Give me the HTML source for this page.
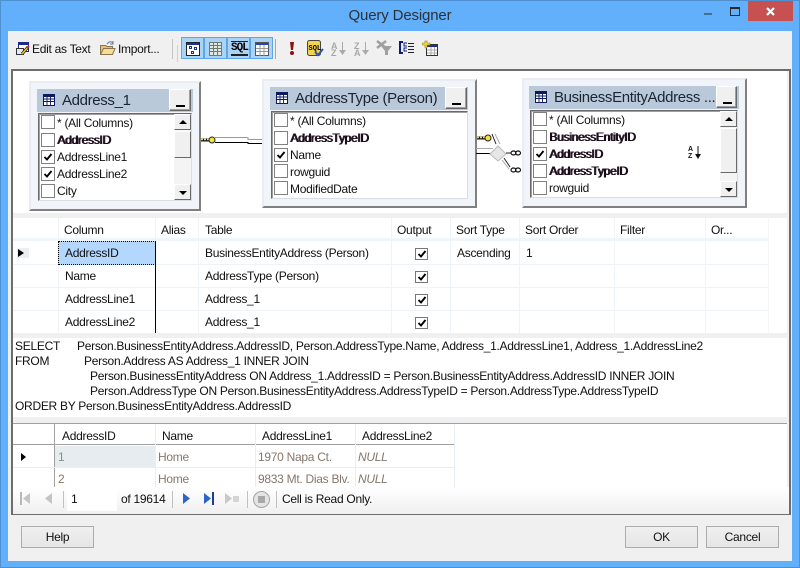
<!DOCTYPE html>
<html><head><meta charset="utf-8"><title>Query Designer</title>
<style>
html,body{margin:0;padding:0;width:800px;height:568px;overflow:hidden;background:#62b0fb}
*{box-sizing:border-box}
body{position:relative;font:12px "Liberation Sans",sans-serif;color:#101010;letter-spacing:-.28px}
div,span,svg{position:absolute}
.t{white-space:nowrap;line-height:14px;height:14px}
.b{color:#1a0a18;text-shadow:1px 0 0 #1a0a18}
.c{width:14px;height:14px;border:1px solid #808080;background:#fff}
.c svg{left:0;top:0}
.o{width:13px;height:12px;left:415px;border:1px solid #777;background:#fff}
.o svg{left:0;top:-1px}
.box{background:#f1f5fa;border:2px solid;border-color:#e9edf2 #808080 #808080 #e9edf2}
.ttl{background:#b9c9da}
.ttx{font-size:15px;line-height:18px;white-space:nowrap;color:#1a2433;letter-spacing:-.35px}
.min{background:#f0f0f0;border:1px solid;border-color:#fff #696969 #696969 #fff;box-shadow:inset -1px -1px 0 #a0a0a0}
.min i{position:absolute;left:6px;bottom:3px;width:9px;height:2px;background:#000}
.list{background:#fff;border:1px solid;border-color:#696969 #d8dde3 #d8dde3 #696969;box-shadow:inset 1px 1px 0 #a0a0a0;overflow:hidden}
.sb{background:#f4f4f4;width:17px}
.sbb{left:0;width:17px;background:#f0f0f0;border:1px solid;border-color:#fff #696969 #696969 #fff}
.up,.dn{width:0;height:0;left:4px;border-left:4px solid transparent;border-right:4px solid transparent}
.up{border-bottom:4px solid #000;top:5px}.dn{border-top:4px solid #000;top:6px}
.hl{background:#eef3f8}
.btn{background:linear-gradient(#f0f0f0,#e5e5e5);border:1px solid #acacac;text-align:center;line-height:20px;height:22px;color:#101010}
.tb{background:#abd3f6;border:1px solid #5ca6ea;height:22px;top:37px;width:23px}
.az{font-size:9px;font-weight:bold;color:#a8a8a8;line-height:8px;height:8px;letter-spacing:0}
</style></head><body>
<svg width="0" height="0" style="left:0;top:0"><defs><symbol id="k" viewBox="0 0 12 12"><path d="M2.500 6 L5 8.500 L9.500 3" fill="none" stroke="#000" stroke-width="1.900"/></symbol></defs></svg>

<!-- window frame -->
<div style="left:0;top:0;width:800px;height:568px;border:1px solid #4e8fd0"></div>
<div class="t" style="left:300px;top:7px;width:200px;text-align:center;font-size:15px;line-height:18px;height:18px;color:#2c3138;letter-spacing:-.15px">Query Designer</div>
<div style="left:748px;top:1px;width:45px;height:20px;background:#c75050"></div>
<svg style="left:765px;top:7px" width="11" height="9"><path d="M2 1L9 8M9 1L2 8" stroke="#fff" stroke-width="2.200" fill="none"/></svg>
<div style="left:704px;top:13px;width:8px;height:2px;background:#44708f"></div>
<div style="left:730px;top:7px;width:10px;height:9px;border:1px solid #2a2a2a;border-top-width:2px"></div>

<!-- client -->
<div style="left:8px;top:31px;width:784px;height:530px;background:#f0f0f0"></div>

<!-- toolbar -->
<svg style="left:15px;top:41px" width="16" height="16"><rect x="3.500" y="1.500" width="10" height="9" fill="#fff" stroke="#1d2a7a"/><rect x="3" y="1" width="11" height="3" fill="#1d2a8a"/><rect x="1.500" y="7.500" width="7" height="6" fill="#e8e8f4" stroke="#333"/><path d="M7 13L13 6" stroke="#222" stroke-width="3"/><path d="M7 13L13 6" stroke="#f2c62e" stroke-width="1.500"/><path d="M12 7L14 5" stroke="#d02828" stroke-width="2"/></svg>
<div class="t" style="left:32px;top:42px">Edit as Text</div>
<svg style="left:99px;top:40px" width="17" height="16"><path d="M1.500 14.500V5.500H7L8 6.500H13.500V14.500Z" fill="#e8c070" stroke="#8a7650"/><path d="M1.500 14.500L4.500 8.500H16L13.500 14.500Z" fill="#f7dc95" stroke="#8a7650"/><path d="M8 4Q11 0 14 3M14 1V4H11" fill="none" stroke="#5a7d98"/></svg>
<div class="t" style="left:118px;top:42px">Import...</div>
<div style="left:172px;top:39px;width:1px;height:20px;background:#c4c4c4"></div>
<div style="left:177px;top:45px;width:1px;height:17px;background:#d0d0d0"></div>
<div style="left:181px;top:37px;width:92px;height:22px;background:#5ca6ea"></div>
<div class="tb" style="left:181px"></div>
<div class="tb" style="left:204px"></div>
<div class="tb" style="left:227px"></div>
<div class="tb" style="left:250px"></div>
<svg style="left:186px;top:42px" width="14" height="14"><rect x=".5" y=".5" width="13" height="13" fill="#fff" stroke="#222"/><rect x="1" y="1" width="12" height="2" fill="#1c2f9e"/><rect x="3.500" y="4.500" width="2" height="2" fill="#fff" stroke="#1c2f9e"/><rect x="8.500" y="5.500" width="2" height="2" fill="#fff" stroke="#1c2f9e"/><rect x="5.500" y="9.500" width="2" height="2" fill="#fff" stroke="#1c2f9e"/></svg>
<svg style="left:209px;top:42px" width="14" height="14"><rect x=".5" y=".5" width="12" height="13" fill="#e0e8e4" stroke="#6a7a76"/><path d="M1 3.500H13M1 6.500H13M1 9.500H13M4.500 1V14M8.500 1V14" stroke="#6a7a76"/></svg>
<div class="t" style="left:231px;top:43px;font:bold 11px 'Liberation Mono',monospace;height:11px;line-height:11px;color:#000;letter-spacing:-1px">SQL</div>
<div style="left:231px;top:41px;width:17px;height:1px;background:#222"></div>
<div style="left:231px;top:54px;width:17px;height:2px;background:#222"></div>
<svg style="left:255px;top:42px" width="14" height="14"><rect x=".5" y=".5" width="13" height="13" fill="#fff" stroke="#555"/><rect x="1" y="1" width="12" height="2" fill="#2146b8"/><path d="M1 6.500H13M1 9.500H13M5 3V14M9 3V14" stroke="#999"/></svg>
<div style="left:275px;top:39px;width:1px;height:20px;background:#a8a8a8"></div>
<svg style="left:288px;top:42px" width="8" height="14"><path d="M2 0H6L5 8H3Z" fill="#8e1111"/><ellipse cx="4" cy="11" rx="2" ry="2" fill="#8e1111"/></svg>
<svg style="left:307px;top:40px" width="17" height="17"><rect x=".5" y=".5" width="13" height="15" rx="2" fill="#f3d44e" stroke="#444"/><text x="1.500" y="10" font-family="Liberation Mono" font-weight="bold" font-size="7" fill="#000" letter-spacing="0">SQL</text><path d="M8 12L11 15L16 9" fill="none" stroke="#2b54b8" stroke-width="2"/></svg>
<div class="t az" style="left:331px;top:42px">A</div>
<div class="t az" style="left:331px;top:49px">Z</div>
<svg style="left:339px;top:42px" width="7" height="14"><path d="M3.500 0V9" stroke="#aaa"/><path d="M0 8H7L3.500 13Z" fill="#aaa"/></svg>
<div class="t az" style="left:354px;top:42px">Z</div>
<div class="t az" style="left:354px;top:49px">A</div>
<svg style="left:362px;top:42px" width="7" height="14"><path d="M3.500 0V9" stroke="#aaa"/><path d="M0 8H7L3.500 13Z" fill="#aaa"/></svg>
<svg style="left:376px;top:40px" width="17" height="16"><path d="M5 6H16L12 11V15H9V11Z" fill="#a0a0a0"/><path d="M1 1L10 8M10 1L1 8" stroke="#a0a0a0" stroke-width="2.500"/></svg>
<svg style="left:399px;top:41px" width="16" height="14"><path d="M4 1H1V12H4" fill="none" stroke="#0c1a80" stroke-width="2"/><path d="M8 2H5V5H8M8 7H5V10H8" fill="none" stroke="#0c1a80"/><path d="M9 2.500H15M9 5.500H15M9 8.500H15M9 11.500H15" stroke="#222"/></svg>
<svg style="left:422px;top:40px" width="17" height="17"><rect x="4.500" y="4.500" width="11" height="11" fill="#fff" stroke="#333"/><rect x="5" y="5" width="10" height="2" fill="#1c2f9e"/><path d="M5 10H15M5 13H15M9 7V15M12.500 7V15" stroke="#aaa"/><path d="M3 1H5V3H8V5H5V8H3V5H0V3H3Z" fill="#f5e23c" stroke="#8a7a10" stroke-width=".6"/></svg>

<!-- main frame -->
<div style="left:11px;top:69px;width:780px;height:446px;border:1px solid #6d6d6d;border-width:2px 2px 1px 2px;background:#fff"></div>
<div style="left:787px;top:71px;width:2px;height:443px;background:#f0f0f0"></div>
<div style="left:13px;top:213px;width:774px;height:5px;background:#f0f0f0"></div>
<div style="left:13px;top:333px;width:774px;height:5px;background:#f0f0f0"></div>
<div style="left:13px;top:417px;width:774px;height:7px;background:#f0f0f0;border-bottom:1px solid #a0a0a0"></div>

<!-- table 1 -->
<div class="box" style="left:29px;top:81px;width:172px;height:130px"></div>
<div class="ttl" style="left:37px;top:89px;width:156px;height:23px"></div>
<svg style="left:43px;top:94px" width="12" height="12"><rect x=".5" y=".5" width="11" height="11" fill="#fff" stroke="#0d1860"/><rect x="1" y="1" width="10" height="2" fill="#0d1860"/><path d="M1 5H11M1 7.500H11M4 3V11M7.500 3V11" stroke="#0d1860" stroke-width=".9"/></svg>
<div class="ttx" style="left:62px;top:92px">Address_1</div>
<div class="min" style="left:169px;top:89px;width:22px;height:22px"><i></i></div>
<div class="list" style="left:38px;top:113px;width:154px;height:88px"></div>
<div class="c" style="left:41px;top:115px"></div><div class="t" style="left:57px;top:116px">* (All Columns)</div>
<div class="c" style="left:41px;top:133px"></div><div class="t b" style="left:57px;top:133px">AddressID</div>
<div class="c" style="left:41px;top:150px"><svg width="12" height="12"><use href="#k"/></svg></div><div class="t" style="left:57px;top:150px">AddressLine1</div>
<div class="c" style="left:41px;top:167px"><svg width="12" height="12"><use href="#k"/></svg></div><div class="t" style="left:57px;top:167px">AddressLine2</div>
<div class="c" style="left:41px;top:184px"></div><div class="t" style="left:57px;top:184px">City</div>
<div class="sb" style="left:174px;top:114px;height:86px"><div class="sbb" style="top:0;height:16px"><div class="up"></div></div><div class="sbb" style="top:17px;height:27px"></div><div class="sbb" style="top:70px;height:16px"><div class="dn"></div></div></div>

<!-- connector 1 -->
<svg style="left:200px;top:130px" width="65" height="20"><path d="M15 7.500H48V9.500H62" fill="none" stroke="#999"/><path d="M15 12.500H48V13.500H62" fill="none" stroke="#000"/><path d="M1 10H9" stroke="#111" stroke-width="3"/><path d="M1 9.500H9" stroke="#f5e23c" stroke-width="1.500" stroke-dasharray="2 1"/><ellipse cx="12" cy="10" rx="3" ry="3" fill="#f5e23c" stroke="#222"/></svg>

<!-- table 2 -->
<div class="box" style="left:262px;top:79px;width:215px;height:129px"></div>
<div class="ttl" style="left:270px;top:87px;width:198px;height:23px"></div>
<svg style="left:276px;top:92px" width="12" height="12"><rect x=".5" y=".5" width="11" height="11" fill="#fff" stroke="#0d1860"/><rect x="1" y="1" width="10" height="2" fill="#0d1860"/><path d="M1 5H11M1 7.500H11M4 3V11M7.500 3V11" stroke="#0d1860" stroke-width=".9"/></svg>
<div class="ttx" style="left:295px;top:90px">AddressType (Person)</div>
<div class="min" style="left:445px;top:87px;width:22px;height:22px"><i></i></div>
<div class="list" style="left:271px;top:111px;width:197px;height:88px"></div>
<div class="c" style="left:274px;top:113px"></div><div class="t" style="left:290px;top:114px">* (All Columns)</div>
<div class="c" style="left:274px;top:131px"></div><div class="t b" style="left:290px;top:131px">AddressTypeID</div>
<div class="c" style="left:274px;top:148px"><svg width="12" height="12"><use href="#k"/></svg></div><div class="t" style="left:290px;top:148px">Name</div>
<div class="c" style="left:274px;top:164px"></div><div class="t" style="left:290px;top:165px">rowguid</div>
<div class="c" style="left:274px;top:181px"></div><div class="t" style="left:290px;top:182px">ModifiedDate</div>

<!-- connector 2 -->
<svg style="left:476px;top:128px" width="48" height="50"><path d="M0 20.500H17" stroke="#aaa"/><path d="M0 25.500H15" stroke="#000"/><path d="M1 10H9" stroke="#111" stroke-width="3"/><path d="M1 9.500H9" stroke="#f5e23c" stroke-width="1.500" stroke-dasharray="2 1"/><ellipse cx="12" cy="10" rx="3" ry="3" fill="#f5e23c" stroke="#222"/><path d="M16 6L20 16" fill="none" stroke="#222"/><path d="M19 6L24 16" fill="none" stroke="#aaa"/><path d="M14 26L22 18L30 26L22 33Z" fill="#e6e6e6" stroke="#bbb"/><path d="M30 25H35" stroke="#222"/><path d="M26 32L33 41" stroke="#aaa"/><path d="M28 30L34 39" stroke="#222"/><g fill="none" stroke="#111" stroke-width="1.200"><ellipse cx="37.500" cy="25" rx="2.500" ry="2"/><ellipse cx="42" cy="25" rx="2.500" ry="2"/><ellipse cx="37.500" cy="42" rx="2.500" ry="2"/><ellipse cx="42" cy="42" rx="2.500" ry="2"/></g></svg>

<!-- table 3 -->
<div class="box" style="left:522px;top:78px;width:225px;height:130px"></div>
<div class="ttl" style="left:529px;top:86px;width:210px;height:23px"></div>
<svg style="left:535px;top:91px" width="12" height="12"><rect x=".5" y=".5" width="11" height="11" fill="#fff" stroke="#0d1860"/><rect x="1" y="1" width="10" height="2" fill="#0d1860"/><path d="M1 5H11M1 7.500H11M4 3V11M7.500 3V11" stroke="#0d1860" stroke-width=".9"/></svg>
<div class="ttx" style="left:554px;top:89px">BusinessEntityAddress ...</div>
<div class="min" style="left:716px;top:86px;width:21px;height:22px"><i></i></div>
<div class="list" style="left:530px;top:110px;width:208px;height:88px"></div>
<div class="c" style="left:533px;top:112px"></div><div class="t" style="left:549px;top:113px">* (All Columns)</div>
<div class="c" style="left:533px;top:130px"></div><div class="t b" style="left:549px;top:130px">BusinessEntityID</div>
<div class="c" style="left:533px;top:147px"><svg width="12" height="12"><use href="#k"/></svg></div><div class="t b" style="left:549px;top:147px">AddressID</div>
<div class="c" style="left:533px;top:164px"></div><div class="t b" style="left:549px;top:164px">AddressTypeID</div>
<div class="c" style="left:533px;top:181px"></div><div class="t" style="left:549px;top:181px">rowguid</div>
<div class="t" style="left:688px;top:146px;font-size:7px;font-weight:bold;line-height:7px;height:7px;color:#111;letter-spacing:0">A</div>
<div class="t" style="left:688px;top:153px;font-size:7px;font-weight:bold;line-height:7px;height:7px;color:#111;letter-spacing:0">Z</div>
<svg style="left:695px;top:146px" width="7" height="14"><path d="M3 0V9" stroke="#111"/><path d="M0 8H6L3 13Z" fill="#111"/></svg>
<div class="sb" style="left:720px;top:111px;height:86px"><div class="sbb" style="top:0;height:16px"><div class="up"></div></div><div class="sbb" style="top:17px;height:45px"></div><div class="sbb" style="top:70px;height:16px"><div class="dn"></div></div></div>

<!-- criteria grid -->
<div style="left:13px;top:218px;width:756px;height:23px;background:#fff;border-bottom:3px solid #f0f5fa"></div>
<div class="hl" style="left:58px;top:218px;width:1px;height:115px"></div>
<div class="hl" style="left:198px;top:218px;width:1px;height:115px"></div>
<div class="hl" style="left:391px;top:218px;width:1px;height:115px"></div>
<div class="hl" style="left:450px;top:218px;width:1px;height:115px"></div>
<div class="hl" style="left:519px;top:218px;width:1px;height:115px"></div>
<div class="hl" style="left:614px;top:218px;width:1px;height:115px"></div>
<div class="hl" style="left:705px;top:218px;width:1px;height:115px"></div>
<div class="hl" style="left:155px;top:218px;width:1px;height:23px"></div>
<div class="hl" style="left:13px;top:264px;width:756px;height:1px"></div>
<div class="hl" style="left:13px;top:287px;width:756px;height:1px"></div>
<div class="hl" style="left:13px;top:310px;width:756px;height:1px"></div>
<div style="left:768px;top:218px;width:1px;height:115px;background:#f4f7fa"></div>
<div style="left:58px;top:241px;width:98px;height:24px;background:#b4d7fd;border:1px dotted #000"></div>
<div style="left:155px;top:241px;width:1px;height:92px;background:#000"></div>
<div style="left:17px;top:248px;width:12px;height:10px;background:#eceff2"></div>
<div style="left:18px;top:249px;width:0;height:0;border-left:6px solid #000;border-top:4px solid transparent;border-bottom:4px solid transparent"></div>
<div class="t" style="left:64px;top:223px">Column</div>
<div class="t" style="left:161px;top:223px">Alias</div>
<div class="t" style="left:205px;top:223px">Table</div>
<div class="t" style="left:397px;top:223px">Output</div>
<div class="t" style="left:456px;top:223px">Sort Type</div>
<div class="t" style="left:525px;top:223px">Sort Order</div>
<div class="t" style="left:620px;top:223px">Filter</div>
<div class="t" style="left:711px;top:223px">Or...</div>
<div class="t" style="left:65px;top:246px">AddressID</div>
<div class="t" style="left:205px;top:246px">BusinessEntityAddress (Person)</div>
<div class="t" style="left:457px;top:246px">Ascending</div>
<div class="t" style="left:526px;top:246px">1</div>
<div class="t" style="left:65px;top:269px">Name</div>
<div class="t" style="left:205px;top:269px">AddressType (Person)</div>
<div class="t" style="left:65px;top:292px">AddressLine1</div>
<div class="t" style="left:205px;top:292px">Address_1</div>
<div class="t" style="left:65px;top:315px">AddressLine2</div>
<div class="t" style="left:205px;top:315px">Address_1</div>
<div class="o" style="top:248px"><svg width="12" height="12"><use href="#k"/></svg></div>
<div class="o" style="top:271px"><svg width="12" height="12"><use href="#k"/></svg></div>
<div class="o" style="top:294px"><svg width="12" height="12"><use href="#k"/></svg></div>
<div class="o" style="top:317px"><svg width="12" height="12"><use href="#k"/></svg></div>

<!-- SQL pane -->
<div class="t" style="left:15px;top:339px">SELECT</div>
<div class="t" style="left:77px;top:339px">Person.BusinessEntityAddress.AddressID, Person.AddressType.Name, Address_1.AddressLine1, Address_1.AddressLine2</div>
<div class="t" style="left:15px;top:354px">FROM</div>
<div class="t" style="left:84px;top:354px">Person.Address AS Address_1 INNER JOIN</div>
<div class="t" style="left:90px;top:369px">Person.BusinessEntityAddress ON Address_1.AddressID = Person.BusinessEntityAddress.AddressID INNER JOIN</div>
<div class="t" style="left:90px;top:384px">Person.AddressType ON Person.BusinessEntityAddress.AddressTypeID = Person.AddressType.AddressTypeID</div>
<div class="t" style="left:15px;top:399px">ORDER BY Person.BusinessEntityAddress.AddressID</div>

<!-- results grid -->
<div style="left:13px;top:424px;width:442px;height:21px;background:#fff;border-bottom:1px solid #a0a0a0"></div>
<div style="left:54px;top:424px;width:1px;height:64px;background:#a0a0a0"></div>
<div style="left:155px;top:424px;width:1px;height:64px;background:#e6eff8"></div>
<div style="left:255px;top:424px;width:1px;height:64px;background:#e6eff8"></div>
<div style="left:355px;top:424px;width:1px;height:64px;background:#e6eff8"></div>
<div style="left:454px;top:424px;width:1px;height:64px;background:#e6eff8"></div>
<div style="left:13px;top:467px;width:442px;height:1px;background:#e6eff8"></div>
<div style="left:55px;top:446px;width:100px;height:21px;background:#e7ecf0"></div>
<div style="left:21px;top:453px;width:0;height:0;border-left:5px solid #000;border-top:4px solid transparent;border-bottom:4px solid transparent"></div>
<div class="t" style="left:62px;top:429px">AddressID</div>
<div class="t" style="left:162px;top:429px">Name</div>
<div class="t" style="left:262px;top:429px">AddressLine1</div>
<div class="t" style="left:362px;top:429px">AddressLine2</div>
<div class="t" style="left:58px;top:450px;color:#8d8d80">1</div>
<div class="t" style="left:158px;top:450px;color:#85776c">Home</div>
<div class="t" style="left:258px;top:450px;color:#85776c">1970 Napa Ct.</div>
<div class="t" style="left:358px;top:450px;color:#85776c;font-style:italic">NULL</div>
<div class="t" style="left:58px;top:472px;color:#85776c">2</div>
<div class="t" style="left:158px;top:472px;color:#85776c">Home</div>
<div class="t" style="left:258px;top:472px;color:#85776c">9833 Mt. Dias Blv.</div>
<div class="t" style="left:358px;top:472px;color:#85776c;font-style:italic">NULL</div>

<!-- nav bar -->
<div style="left:13px;top:487px;width:776px;height:27px;background:linear-gradient(#fff,#f0f0f0)"></div>
<div style="left:67px;top:488px;width:50px;height:23px;background:#fff"></div>
<svg style="left:18px;top:491px" width="14" height="15"><path d="M2 1H4V14H2Z" fill="#b8b8b8"/><path d="M12 2V13L5 7.500Z" fill="#c4c4c4"/></svg>
<svg style="left:44px;top:491px" width="10" height="15"><path d="M8 2V13L1 7.500Z" fill="#c4c4c4"/></svg>
<div style="left:63px;top:491px;width:1px;height:17px;background:#c0c0c0"></div>
<div class="t" style="left:71px;top:492px">1</div>
<div class="t" style="left:121px;top:492px">of 19614</div>
<div style="left:172px;top:491px;width:1px;height:17px;background:#c0c0c0"></div>
<svg style="left:181px;top:491px" width="10" height="15"><path d="M2 2V13L9 7.500Z" fill="#2a66c8"/></svg>
<svg style="left:203px;top:491px" width="13" height="15"><path d="M1 2V13L8 7.500Z" fill="#2a66c8"/><path d="M9 1H11V14H9Z" fill="#1d3f8a"/></svg>
<svg style="left:224px;top:491px" width="16" height="15"><path d="M1 2V13L8 7.500Z" fill="#c8c8c8"/><rect x="9" y="5" width="6" height="6" fill="#d4d4d4"/></svg>
<div style="left:247px;top:491px;width:1px;height:17px;background:#c0c0c0"></div>
<div style="left:253px;top:491px;width:17px;height:17px;border-radius:50%;background:#e4e4e4;border:1px solid #a4a4a4"></div>
<div style="left:258px;top:496px;width:7px;height:7px;background:#a8a8a8"></div>
<div style="left:276px;top:491px;width:1px;height:17px;background:#c0c0c0"></div>
<div class="t" style="left:282px;top:492px">Cell is Read Only.</div>

<!-- dialog buttons -->
<div class="btn" style="left:21px;top:526px;width:73px">Help</div>
<div class="btn" style="left:625px;top:526px;width:73px">OK</div>
<div class="btn" style="left:706px;top:526px;width:73px">Cancel</div>
</body></html>
